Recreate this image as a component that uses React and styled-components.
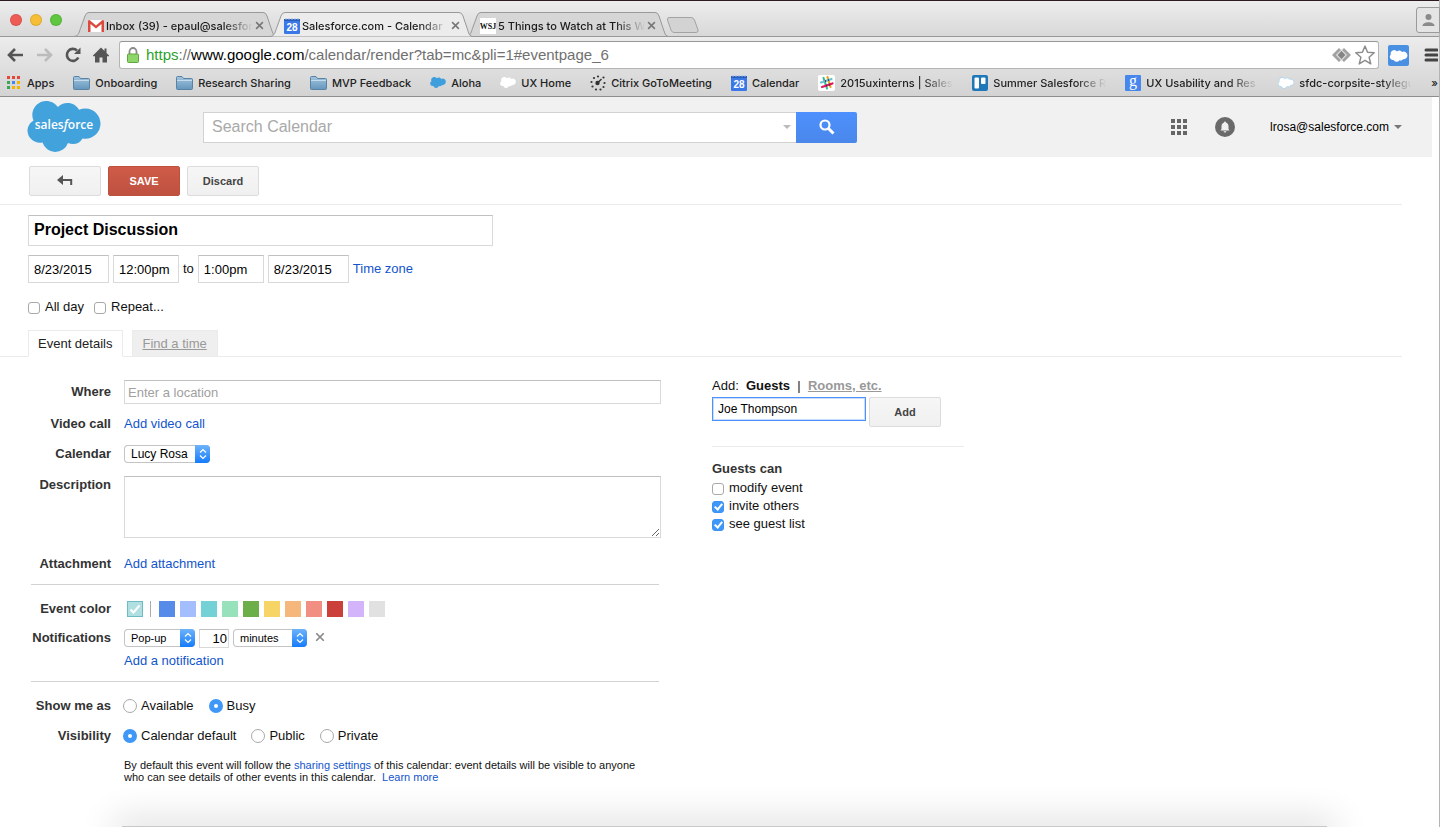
import React from 'react';
import styled, { createGlobalStyle, css } from 'styled-components';

const Global = createGlobalStyle`
  * { box-sizing: border-box; }
  html, body { margin: 0; padding: 0; background: #fff; }
  body { font-family: "Liberation Sans", Arial, sans-serif; font-size: 13px; line-height: 18px; color: #111; overflow-x: hidden; }
  button, input, select, textarea { font: inherit; color: inherit; margin: 0; }
  a { text-decoration: none; color: #15c; }
  svg { display: block; flex: none; }
`;

/* ---------- browser window ---------- */
const Window = styled.div`
  min-height: 100vh;
  position: relative;
  border-right: 1px solid #b4b4b4;
`;
const TabStrip = styled.div`
  display: flex;
  align-items: flex-end;
  height: 37px;
  border-top: 1px solid #2b1a22;
  border-bottom: 1px solid #989898;
  background: linear-gradient(#ededed, #d8d8d8);
`;
const Lights = styled.div`
  display: flex;
  gap: 8px;
  padding: 0 12px 10px 10px;
`;
const Light = styled.span`
  width: 12px;
  height: 12px;
  border-radius: 50%;
  background: ${p => p.$color};
  box-shadow: inset 0 0 0 1px rgba(0, 0, 0, 0.1);
`;
const TabBox = styled.div`
  position: relative;
  flex: none;
  display: flex;
  align-items: center;
  gap: 2px;
  width: 202px;
  height: 25px;
  margin-right: -6px;
  padding: 2px 12px 0 14px;
  margin-bottom: -1px;
  z-index: ${p => (p.$active ? 2 : 1)};
  font: 500 11px/16px Inter, sans-serif;
  color: #1a1a1a;
`;
const TabShape = styled.svg`
  position: absolute;
  inset: 0;
  z-index: -1;
`;
const fade = css`
  overflow: hidden;
  white-space: nowrap;
  -webkit-mask-image: linear-gradient(to left, transparent, #000 30px);
  mask-image: linear-gradient(to left, transparent, #000 30px);
`;
const TabLabel = styled.span`
  flex: 1;
  ${fade}
`;
const PlainButton = styled.button`
  display: flex;
  align-items: center;
  justify-content: center;
  padding: 0;
  border: 0;
  background: none;
  flex: none;
`;
const NewTab = styled(PlainButton)`
  align-self: flex-end;
  margin: 0 0 3px 4px;
`;
const ProfileButton = styled(PlainButton)`
  width: 24px;
  height: 26px;
  margin: 0 -1px 3px auto;
  border: 1px solid #9b9b9b;
  border-radius: 3px 0 0 3px;
  background: #e4e4e4;
`;
const Chrome = styled.div`
  background: linear-gradient(#ececec, #d3d3d3);
  border-bottom: 1px solid #8e8e8e;
  height: 60px;
`;
const ToolRow = styled.div`
  display: flex;
  align-items: center;
  padding: 4px 1px 0 7px;
`;
const NavButtons = styled.div`
  display: flex;
  align-items: center;
  gap: 12px;
  padding-right: 10px;
`;
const Omnibox = styled.div`
  flex: 1;
  display: flex;
  align-items: center;
  gap: 4px;
  height: 28px;
  padding: 0 3px 0 7px;
  border: 1px solid #b5b5b5;
  border-top-color: #979797;
  border-radius: 3px;
  background: #fff;
`;
const Address = styled.div`
  flex: 1;
  padding-left: 3px;
  font-size: 15px;
  color: #707070;
  b { font-weight: 400; color: #2ba32b; }
  strong { font-weight: 400; color: #000; }
`;
const Extras = styled.div`
  display: flex;
  align-items: center;
  gap: 15px;
  padding-left: 9px;
`;
const Bookmarks = styled.nav`
  display: flex;
  align-items: center;
  gap: 19px;
  height: 27px;
  padding-left: 6px;
  overflow: hidden;
`;
const Bookmark = styled.a`
  flex: none;
  display: flex;
  align-items: center;
  gap: 5px;
  color: #222;
  font: 500 11px/16px Inter, sans-serif;
`;
const BookmarkLabel = styled.span`
  white-space: nowrap;
  ${p => p.$clip && css`width: 113px; ${fade}`}
`;

/* ---------- calendar header ---------- */
const Header = styled.header`
  display: flex;
  align-items: center;
  height: 60px;
  margin-right: 7px;
  padding: 0 30px 0 27px;
  background: #f1f1f1;
`;
const SearchForm = styled.form`
  display: flex;
  flex: 0 1 654px;
  margin-left: 102px;
  height: 31px;
`;
const SearchBox = styled.div`
  flex: 1;
  display: flex;
  align-items: center;
  padding: 0 5px 0 8px;
  border: 1px solid #d2d2d2;
  border-right: 0;
  background: #fff;
`;
const SearchInput = styled.input`
  flex: 1;
  border: 0;
  padding: 0;
  outline: 0;
  font-size: 16px;
  &::placeholder { color: #a9a9a9; opacity: 1; }
`;
const SearchButton = styled(PlainButton)`
  width: 61px;
  border-radius: 0 2px 2px 0;
  background: linear-gradient(#4d90fe, #4a87ea);
`;
const Account = styled.div`
  display: flex;
  align-items: center;
  margin-left: auto;
`;
const AccountIcon = styled(PlainButton)`
  margin-left: 27px;
`;
const AccountLink = styled(PlainButton)`
  gap: 5px;
  margin-left: 35px;
  font-size: 12px;
  color: #000;
`;

/* ---------- event page ---------- */
const Main = styled.main`
  margin-right: 37px;
`;
const Actions = styled.div`
  display: flex;
  gap: 7px;
  padding: 9px 0 8px 29px;
  border-bottom: 1px solid #ebebeb;
`;
const Button = styled.button`
  display: flex;
  align-items: center;
  justify-content: center;
  width: 72px;
  height: 30px;
  padding: 0;
  border: 1px solid ${p => (p.$primary ? '#bf5040' : '#dcdcdc')};
  border-radius: 2px;
  background: ${p => (p.$primary ? 'linear-gradient(#cf5b48, #bf5140)' : 'linear-gradient(#f6f6f6, #f0f0f0)')};
  color: ${p => (p.$primary ? '#fff' : '#444')};
  font-size: 11px;
  line-height: 16px;
  font-weight: 700;
`;
const Field = styled.input`
  height: ${p => p.$h || 28}px;
  width: ${p => p.$w}px;
  padding: 0 5px;
  border: 1px solid #d9d9d9;
  border-top-color: #c0c0c0;
  background: #fff;
  color: #000;
  outline: 0;
  &::placeholder { color: #a0a0a0; opacity: 1; }
`;
const WideField = styled(Field)`
  width: 100%;
  padding: 0 3px;
`;
const TitleField = styled(Field)`
  display: block;
  font-size: 16px;
  font-weight: 700;
  padding-bottom: 2px;
`;
const EventHead = styled.section`
  padding: 10px 0 0 28px;
`;
const When = styled.div`
  display: flex;
  align-items: center;
  gap: 4px;
  margin-top: 9px;
`;
const Options = styled.div`
  display: flex;
  gap: 10px;
  margin-top: 15px;
`;
const Choice = styled.label`
  display: flex;
  align-items: center;
  gap: 5px;
  color: #111;
`;
const Check = styled.input.attrs({ type: 'checkbox' })`
  appearance: none;
  width: 12px;
  height: 12px;
  border: 1px solid #a9a9a9;
  border-radius: 3px;
  background: #fff;
  position: relative;
  top: 1px;
  &:checked { border-color: #3b92f5; background: #3f97f8; }
  &:checked::after {
    content: "";
    position: absolute;
    left: 3px;
    top: 0;
    box-sizing: border-box;
    width: 5px;
    height: 8px;
    border: solid #fff;
    border-width: 0 2px 2px 0;
    transform: rotate(40deg);
  }
`;
const Radio = styled.input.attrs({ type: 'radio' })`
  appearance: none;
  width: 14px;
  height: 14px;
  border: 1px solid #a9a9a9;
  border-radius: 50%;
  background: #fff;
  &:checked { border: 5px solid #3f97f8; }
`;
const Tabs = styled.div`
  display: flex;
  gap: 9px;
  height: 27px;
  margin-top: 14px;
  padding-left: 28px;
  border-bottom: 1px solid #ebebeb;
`;
const PageTab = styled.button`
  height: 27px;
  padding: 0 10px 0 9px;
  border: 1px solid #ebebeb;
  border-bottom-color: ${p => (p.$active ? '#fff' : '#ebebeb')};
  background: ${p => (p.$active ? '#fff' : '#efefef')};
  color: ${p => (p.$active ? '#222' : '#999')};
  text-decoration: ${p => (p.$active ? 'none' : 'underline')};
`;
const Columns = styled.div`
  display: flex;
  align-items: flex-start;
  gap: 51px;
  padding: 23px 0 0 31px;
`;
const Form = styled.form`
  flex: 0 1 630px;
`;
const Row = styled.div`
  display: grid;
  grid-template-columns: 80px 1fr;
  column-gap: 13px;
  align-items: ${p => (p.$top ? 'start' : 'center')};
  min-height: ${p => p.$h}px;
  margin-top: ${p => p.$gap || 0}px;
`;
const RowLabel = styled.label`
  text-align: right;
  white-space: nowrap;
  font-weight: 700;
  color: #333;
`;
const TextArea = styled.textarea`
  display: block;
  width: 100%;
  height: 62px;
  border: 1px solid #d9d9d9;
  border-top-color: #c0c0c0;
  background: #fff;
`;
const Rule = styled.hr`
  height: 1px;
  margin: 0 2px 0 0;
  border: 0;
  background: #d2d2d2;
`;
const SelectBox = styled.span`
  position: relative;
  display: inline-flex;
  width: ${p => p.$w}px;
  height: 18px;
  border-radius: 4px;
  overflow: hidden;
  box-shadow: inset 0 0 0 1px #c4c4c4;
`;
const Select = styled.select`
  appearance: none;
  width: 100%;
  padding: 0 0 0 7px;
  border: 0;
  background: none;
  font-size: ${p => p.$size || 12}px;
  line-height: 18px;
  color: #000;
  outline: 0;
`;
const Stepper = styled.span`
  position: absolute;
  right: 0;
  top: 0;
  display: flex;
  align-items: center;
  justify-content: center;
  width: 15px;
  height: 18px;
  background: linear-gradient(#6db3fa, #167bfb);
  pointer-events: none;
`;
const Swatches = styled.div`
  display: flex;
  align-items: center;
  gap: 5px;
  padding-left: 3px;
`;
const Swatch = styled(PlainButton)`
  width: 16px;
  height: 16px;
  background: ${p => p.$color};
  ${p => p.$on && css`border: 1px solid #6dbdc0;`}
`;
const SwatchBar = styled.span`
  width: 1px;
  height: 16px;
  margin: 0 3px 0 2px;
  background: #aaa;
`;
const Inline = styled.div`
  display: flex;
  align-items: center;
  gap: ${p => p.$gap || 4}px;
`;
const NumberField = styled(Field)`
  padding: 0 1px;
  text-align: right;
`;
const Remove = styled(PlainButton)`
  margin: -3px 0 0 4px;
`;
const LinkRow = styled.div`
  margin: -5px 0 11px 93px;
`;
const RadioRows = styled.div`
  display: flex;
  flex-direction: column;
  gap: 12px;
  padding-top: 15px;
  ${Inline} { margin-left: -1px; }
  ${Choice} { gap: 4px; }
`;
const Note = styled.p`
  margin: 14px 0 0 93px;
  font-size: 11px;
  line-height: 12px;
  color: #111;
  white-space: nowrap;
`;
const Guests = styled.aside`
  flex: 0 0 252px;
  margin-top: -3px;
`;
const GuestTabs = styled.div`
  line-height: 18px;
  white-space: pre;
  a { font-weight: 700; color: #999; text-decoration: underline; }
`;
const GuestAdd = styled.div`
  display: flex;
  align-items: flex-start;
  gap: 3px;
  margin-top: 2px;
  padding-bottom: 19px;
  border-bottom: 1px solid #ebebeb;
`;
const GuestField = styled(Field)`
  font-size: 12px;
  border: 1px solid #4d90fe;
  box-shadow: inset 0 0 0 1px #c9dcfb;
`;
const GuestHeading = styled.h2`
  margin: 13px 0 1px;
  font-size: 13px;
  line-height: 18px;
  color: #333;
`;
const DockShadow = styled.div`
  position: fixed;
  left: 122px;
  right: 113px;
  bottom: 0;
  height: 1px;
  background: #c8c8c8;
  box-shadow: 0 4px 36px 8px rgba(0, 0, 0, 0.2);
  pointer-events: none;
`;

/* ---------- icons ---------- */
const Cloud = ({ w, h, fill, stroke }) => (
  <svg width={w} height={h} viewBox="0 0 73 51">
    <path fill={fill} stroke={stroke} strokeWidth={stroke ? 4 : 0} d="M30.4 6A13.300 13.300 0 0 1 40 2C45 2 49.200 4.700 51.500 8.800A16 16 0 0 1 58 7.400C66.300 7.400 73 14.200 73 22.600S66.300 37.800 58 37.800C57 37.800 56 37.700 55 37.500A11 11 0 0 1 45.400 43C43.600 43 42 42.600 40.500 41.900A13.800 13.800 0 0 1 27.500 51A13.800 13.800 0 0 1 15 41.500C14.500 41.600 13 41.700 12.500 41.700A12.400 12.400 0 0 1 0 30C0 25.500 2.400 21.700 6 19.500A14 14 0 0 1 4.800 14C4.800 6.300 11 0 18.800 0C23.500 0 27.700 2.300 30.400 6Z" />
  </svg>
);
const LogoBox = styled.a`
  position: relative;
  display: block;
  width: 74px;
  margin-top: -2px;
`;
const LogoText = styled.span`
  position: absolute;
  left: 0;
  right: 0;
  top: 14px;
  text-align: center;
  font: 600 12px/20px "Open Sans", sans-serif;
  color: #fff;
`;
const Folder = () => (
  <svg width="17" height="16" viewBox="0 0 17 16">
    <defs><linearGradient id="fold" x2="0" y2="1"><stop stopColor="#a3c5de" /><stop offset="1" stopColor="#6596bd" /></linearGradient></defs>
    <path d="M.5 13.500V2.500Q.5 1.500 1.500 1.500H6L7.500 3.500H15.500Q16.500 3.500 16.500 4.500V13.500Q16.500 14.500 15.500 14.500H1.500Q.5 14.500 .5 13.500Z" fill="url(#fold)" stroke="#5a82a3" />
    <path d="M1 5.500H16" stroke="#c3dbeb" />
  </svg>
);
const AppsDots = () => {
  const c = ['#e8453c', '#e8453c', '#e8453c', '#3aa757', '#4285f4', '#f5b400', '#3aa757', '#f5b400', '#f5b400'];
  return <svg width="16" height="14" viewBox="0 0 16 14">{c.map((f, i) => <rect key={i} x={1 + (i % 3) * 5} y={Math.floor(i / 3) * 5} width="3" height="3" fill={f} />)}</svg>;
};
const Cal28 = () => (
  <svg width="16" height="16" viewBox="0 0 16 16">
    <rect y="1" width="16" height="15" rx="1" fill="#3b78e7" />
    <path d="M0 1H16V3H0Z" fill="#2a5db8" />
    <path d="M2 0V2M5 0V2M8 0V2M11 0V2M14 0V2" stroke="#9db9ea" />
    <text x="8" y="13" textAnchor="middle" fontFamily="Liberation Sans, sans-serif" fontSize="10" fontWeight="700" fill="#fff">28</text>
  </svg>
);
const Gmail = () => (
  <svg width="16" height="12" viewBox="0 0 16 12">
    <rect width="16" height="12" rx="1" fill="#fff" />
    <path d="M0 1Q0 0 1.500 0L8 5.500L14.500 0Q16 0 16 1V12H13.500V4L8 8.500L2.500 4V12H0Z" fill="#dc4a3d" />
  </svg>
);
const Wsj = () => (
  <svg width="16" height="16" viewBox="0 0 16 16">
    <rect width="16" height="16" fill="#fff" />
    <text x="8" y="11" textAnchor="middle" fontFamily="Liberation Serif, serif" fontSize="8" fontWeight="700" fill="#111">WSJ</text>
  </svg>
);
const Citrix = () => (
  <svg width="16" height="16" viewBox="0 0 16 16" fill="#333">
    {[[8, 1.5], [4, 3], [13.5, 2.5], [1.5, 7], [14.5, 8], [2.5, 11.5], [6, 14.5], [10.5, 14.5], [13.5, 12]].map(([x, y]) => <circle key={x + '-' + y} cx={x} cy={y} r="1.100" />)}
    <circle cx="7.500" cy="8" r="2.200" />
    <path d="M7.500 8L11.500 4" stroke="#333" strokeWidth="1.400" />
  </svg>
);
const Slack = () => (
  <svg width="17" height="16" viewBox="0 0 17 16">
    <rect width="17" height="16" rx="2" fill="#fff" />
    <g strokeWidth="2.200" strokeLinecap="round">
      <path d="M5.500 3L9 13.500" stroke="#3eb991" /><path d="M9.500 2L12.500 12" stroke="#e9a820" />
      <path d="M3 7.500L13.500 4" stroke="#63c3d8" /><path d="M4 12L14.500 8.500" stroke="#e01563" />
    </g>
    <path d="M7 6.200L8 5.900M10 5.200L11 4.900M8 10.700L9 10.400M11 9.700L12 9.400" stroke="#5b2b3d" strokeWidth="2" />
  </svg>
);
const Trello = () => (
  <svg width="16" height="16" viewBox="0 0 16 16">
    <rect width="16" height="16" rx="2" fill="#1f78b8" />
    <rect x="2.500" y="2.500" width="4.500" height="11" rx="1" fill="#fff" /><rect x="9" y="2.500" width="4.500" height="6.500" rx="1" fill="#fff" />
  </svg>
);
const GoogleG = () => (
  <svg width="16" height="16" viewBox="0 0 16 16">
    <rect width="16" height="16" rx="1" fill="#4787ed" />
    <text x="8" y="11" textAnchor="middle" fontFamily="Liberation Serif, serif" fontSize="16" fill="#fff">g</text>
  </svg>
);
const Cross = ({ size, color }) => (
  <svg width={size} height={size} viewBox="0 0 8 8"><path d="M1 1L7 7M7 1L1 7" stroke={color} strokeWidth="1.400" /></svg>
);
const Caret = ({ color }) => (
  <svg width="8" height="4" viewBox="0 0 8 4"><path d="M0 0H8L4 4Z" fill={color} /></svg>
);
const UpDown = () => (
  <svg width="8" height="12" viewBox="0 0 8 12" fill="none" stroke="#fff" strokeWidth="1.200"><path d="M1 4.500L4 1.500L7 4.500M1 7.500L4 10.500L7 7.500" /></svg>
);

const BrowserTab = ({ icon, label, active }) => (
  <TabBox $active={active}>
    <TabShape width="202" height="25" viewBox="0 0 202 25">
      <path d="M0 24.500C5 24 5 20 7 15L11 4Q12 .5 15 .5H189Q192 .5 193 4L198 19Q199 24 202 24.500" fill={active ? '#ececec' : '#d6d6d6'} stroke="#999" />
      {!active && <path d="M0 24.500H202" stroke="#989898" />}
    </TabShape>
    {icon}
    <TabLabel>{label}</TabLabel>
    <PlainButton aria-label="Close tab"><Cross size={9} color="#777" /></PlainButton>
  </TabBox>
);

const Dropdown = ({ id, w, size, label, value }) => (
  <SelectBox $w={w}>
    <Select id={id} $size={size} aria-label={label} defaultValue={value}><option>{value}</option></Select>
    <Stepper><UpDown /></Stepper>
  </SelectBox>
);

const BOOKMARKS = [
  [<AppsDots />, 'Apps'],
  [<Folder />, 'Onboarding'],
  [<Folder />, 'Research Sharing'],
  [<Folder />, 'MVP Feedback'],
  [<Cloud w={16} h={11} fill="#3f9fdc" />, 'Aloha'],
  [<Cloud w={16} h={11} fill="#fff" />, 'UX Home'],
  [<Citrix />, 'Citrix GoToMeeting'],
  [<Cal28 />, 'Calendar'],
  [<Slack />, '2015uxinterns | Sales', true],
  [<Trello />, 'Summer Salesforce R', true],
  [<GoogleG />, 'UX Usability and Res', true],
  [<Cloud w={16} h={12} fill="#fff" stroke="#a9d3ee" />, 'sfdc-corpsite-stylegu', true],
];
const COLORS = ['#568bea', '#a4bdfc', '#74d2d7', '#98e2bb', '#6cae47', '#f6d465', '#f6b77c', '#f18f82', '#cb403b', '#d3b4fb', '#e1e1e1'];

export default function App() {
  return (
    <Window>
      <Global />
      <TabStrip>
        <Lights><Light $color="#ee5b54" /><Light $color="#f6bd35" /><Light $color="#5ec73f" /></Lights>
        <BrowserTab icon={<Gmail />} label="Inbox (39) - epaul@salesfor" />
        <BrowserTab icon={<Cal28 />} label="Salesforce.com - Calendar" active />
        <BrowserTab icon={<Wsj />} label="5 Things to Watch at This W" />
        <NewTab aria-label="New tab">
          <svg width="34" height="16" viewBox="0 0 34 16"><path d="M3 .5H25Q27.500 .5 28.500 3L32 13Q32.500 15.500 30 15.500H8Q6 15.500 5 13L1.500 3Q1 .5 3 .5Z" fill="#d3d3d3" stroke="#a3a3a3" /></svg>
        </NewTab>
        <ProfileButton aria-label="Profile">
          <svg width="13" height="12" viewBox="0 0 13 12" fill="#8a8a8a"><circle cx="6.500" cy="3" r="3" /><path d="M.5 12C.5 7 12.500 7 12.500 12Z" /></svg>
        </ProfileButton>
      </TabStrip>
      <Chrome>
        <ToolRow>
          <NavButtons>
            <PlainButton aria-label="Back"><svg width="17" height="16" viewBox="0 0 17 16" fill="none" stroke="#555" strokeWidth="2.600"><path d="M16 8H2.500M8 2L2 8L8 14" /></svg></PlainButton>
            <PlainButton aria-label="Forward"><svg width="17" height="16" viewBox="0 0 17 16" fill="none" stroke="#bcbcbc" strokeWidth="2.600"><path d="M1 8H14.500M9 2L15 8L9 14" /></svg></PlainButton>
            <PlainButton aria-label="Reload"><svg width="16" height="16" viewBox="0 0 16 16"><path d="M13.300 10.500A6 6 0 1 1 12 3.500" fill="none" stroke="#555" strokeWidth="2.600" /><path d="M15.500 .5V7H9Z" fill="#555" /></svg></PlainButton>
            <PlainButton aria-label="Home"><svg width="16" height="16" viewBox="0 0 16 16" fill="#555"><path d="M8 .5L11.500 4V1.500H13.500V6L16 8.500V9.200H14V15.500H9.500V10.500H6.500V15.500H2V9.200H0V8.500Z" /></svg></PlainButton>
          </NavButtons>
          <Omnibox>
            <svg width="12" height="16" viewBox="0 0 12 16"><path d="M2.500 8V4.500A3.500 3.500 0 0 1 9.500 4.500V8" fill="none" stroke="#8b8b8b" strokeWidth="1.800" /><rect x=".5" y="7" width="11" height="8.500" rx="1" fill="#8fd66a" stroke="#5fa53e" /></svg>
            <Address><b>https</b>://<strong>www.google.com</strong>/calendar/render?tab=mc&amp;pli=1#eventpage_6</Address>
            <svg width="19" height="16" viewBox="0 0 19 16"><path d="M7 1L0 8L7 15L9.500 12.500L12 15L19 8L12 1L9.500 3.500Z" fill="#a2a2a2" /><path d="M9.500 3.200L4.700 8L9.500 12.800L14.300 8Z" fill="#858585" stroke="#dcdcdc" strokeWidth="1.200" /></svg>
            <svg width="20" height="20" viewBox="0 0 18 18"><path d="M9 1L11.300 6.600L17.300 7L12.700 11L14.200 17L9 13.800L3.800 17L5.300 11L.7 7L6.700 6.600Z" fill="#fff" stroke="#8c8c8c" strokeWidth="1.300" strokeLinejoin="round" /></svg>
          </Omnibox>
          <Extras>
            <PlainButton aria-label="Salesforce extension">
              <svg width="21" height="21" viewBox="0 0 21 21"><rect width="21" height="21" rx="2" fill="#4a90e2" /><path fill="#fff" d="M9 6.500A3.300 3.300 0 0 1 14 7A3.800 3.800 0 0 1 19.500 10.500A3.900 3.900 0 0 1 15 14.200A3 3 0 0 1 11.500 15.200A3.500 3.500 0 0 1 5.500 15A3.200 3.200 0 0 1 2.800 9.500A3.500 3.500 0 0 1 9 6.500Z" /></svg>
            </PlainButton>
            <PlainButton aria-label="Menu"><svg width="14" height="14" viewBox="0 0 14 14" stroke="#444" strokeWidth="3" strokeLinecap="round"><path d="M2 2H13M2 7H13M2 12H13" /></svg></PlainButton>
          </Extras>
        </ToolRow>
        <Bookmarks>
          {BOOKMARKS.map(([icon, label, clip]) => (
            <Bookmark href="#" key={label}>{icon}<BookmarkLabel $clip={clip}>{label}</BookmarkLabel></Bookmark>
          ))}
          <Bookmark href="#">»</Bookmark>
        </Bookmarks>
      </Chrome>

      <Header>
        <LogoBox href="#"><Cloud w={74} h={51} fill="#42a2dc" /><LogoText>sales<i>f</i>orce</LogoText></LogoBox>
        <SearchForm>
          <SearchBox><SearchInput aria-label="Search Calendar" placeholder="Search Calendar" /><Caret color="#bbb" /></SearchBox>
          <SearchButton type="button" aria-label="Search">
            <svg width="16" height="16" viewBox="0 0 16 16" fill="none" stroke="#fff"><circle cx="6" cy="6" r="4.500" strokeWidth="2.200" /><path d="M9.500 9.500L14.500 14.500" strokeWidth="3" /></svg>
          </SearchButton>
        </SearchForm>
        <Account>
          <PlainButton aria-label="Apps">
            <svg width="17" height="17" viewBox="0 0 17 17" fill="#666">{[0, 6, 12].map(y => [0, 6, 12].map(x => <rect key={x + '-' + y} x={x} y={y} width="4" height="4" />))}</svg>
          </PlainButton>
          <AccountIcon aria-label="Notifications">
            <svg width="20" height="20" viewBox="0 0 20 20"><circle cx="10" cy="10" r="10" fill="#6a6a6a" /><path d="M10 4.500Q11 4.500 11 5.500C13 6 13.500 8 13.500 9.500V12L14.500 13.500H5.500L6.500 12V9.500C6.500 8 7 6 9 5.500Q9 4.500 10 4.500ZM8.500 14.200H11.500Q11.300 15.500 10 15.500Q8.700 15.500 8.500 14.200Z" fill="#f1f1f1" /></svg>
          </AccountIcon>
          <AccountLink>lrosa@salesforce.com<Caret color="#777" /></AccountLink>
        </Account>
      </Header>

      <Main>
        <Actions>
          <Button aria-label="Back to calendar"><svg width="16" height="12" viewBox="0 0 16 12"><path d="M5 5H14.200V10" fill="none" stroke="#555" strokeWidth="2" /><path d="M0 5L6 0V10Z" fill="#555" /></svg></Button>
          <Button $primary>SAVE</Button>
          <Button>Discard</Button>
        </Actions>
        <EventHead>
          <TitleField $w={465} $h={31} aria-label="Event title" defaultValue="Project Discussion" />
          <When>
            <Field $w={81} aria-label="Start date" defaultValue="8/23/2015" />
            <Field $w={66} aria-label="Start time" defaultValue="12:00pm" />
            <span>to</span>
            <Field $w={66} aria-label="End time" defaultValue="1:00pm" />
            <Field $w={81} aria-label="End date" defaultValue="8/23/2015" />
            <a href="#">Time zone</a>
          </When>
          <Options>
            <Choice><Check />All day</Choice>
            <Choice><Check />Repeat...</Choice>
          </Options>
        </EventHead>
        <Tabs>
          <PageTab $active>Event details</PageTab>
          <PageTab>Find a time</PageTab>
        </Tabs>
        <Columns>
          <Form>
            <Row $h={24}><RowLabel htmlFor="where">Where</RowLabel><WideField id="where" $h={24} placeholder="Enter a location" /></Row>
            <Row $h={40}><RowLabel as="span">Video call</RowLabel><a href="#">Add video call</a></Row>
            <Row $h={20}><RowLabel htmlFor="cal">Calendar</RowLabel><Dropdown id="cal" w={86} value="Lucy Rosa" /></Row>
            <Row $top $gap={12}><RowLabel htmlFor="desc">Description</RowLabel><TextArea id="desc" /></Row>
            <Row $h={40} $gap={6}><RowLabel as="span">Attachment</RowLabel><a href="#">Add attachment</a></Row>
            <Rule />
            <Row $h={20} $gap={14}>
              <RowLabel as="span">Event color</RowLabel>
              <Swatches>
                <Swatch type="button" aria-label="Default color" $on $color="#b0dfe2"><svg width="12" height="12" viewBox="0 0 12 12" fill="none" stroke="#fff" strokeWidth="2"><path d="M1.500 6.500L4.500 9.500L10.500 2.500" /></svg></Swatch>
                <SwatchBar />
                {COLORS.map(c => <Swatch type="button" key={c} aria-label={'Color ' + c} $color={c} />)}
              </Swatches>
            </Row>
            <Row $h={38}>
              <RowLabel htmlFor="notif">Notifications</RowLabel>
              <Inline>
                <Dropdown id="notif" w={71} size={11} value="Pop-up" />
                <NumberField $w={30} $h={19} aria-label="Amount" defaultValue="10" />
                <Dropdown w={74} size={11} label="Unit" value="minutes" />
                <Remove type="button" aria-label="Remove notification"><Cross size={10} color="#8a8a8a" /></Remove>
              </Inline>
            </Row>
            <LinkRow><a href="#">Add a notification</a></LinkRow>
            <Rule />
            <RadioRows>
              <Row $h={18}>
                <RowLabel as="span">Show me as</RowLabel>
                <Inline $gap={15}>
                  <Choice><Radio name="show" />Available</Choice>
                  <Choice><Radio name="show" defaultChecked />Busy</Choice>
                </Inline>
              </Row>
              <Row $h={18}>
                <RowLabel as="span">Visibility</RowLabel>
                <Inline $gap={15}>
                  <Choice><Radio name="vis" defaultChecked />Calendar default</Choice>
                  <Choice><Radio name="vis" />Public</Choice>
                  <Choice><Radio name="vis" />Private</Choice>
                </Inline>
              </Row>
            </RadioRows>
            <Note>
              By default this event will follow the <a href="#">sharing settings</a> of this calendar: event details will be visible to anyone<br />
              who can see details of other events in this calendar. &nbsp;<a href="#">Learn more</a>
            </Note>
          </Form>
          <Guests>
            <GuestTabs>Add:  <b>Guests</b>  |  <a href="#">Rooms, etc.</a></GuestTabs>
            <GuestAdd>
              <GuestField $w={154} $h={24} aria-label="Guest" defaultValue="Joe Thompson" />
              <Button>Add</Button>
            </GuestAdd>
            <GuestHeading>Guests can</GuestHeading>
            <Choice><Check />modify event</Choice>
            <Choice><Check defaultChecked />invite others</Choice>
            <Choice><Check defaultChecked />see guest list</Choice>
          </Guests>
        </Columns>
      </Main>
      <DockShadow />
    </Window>
  );
}
